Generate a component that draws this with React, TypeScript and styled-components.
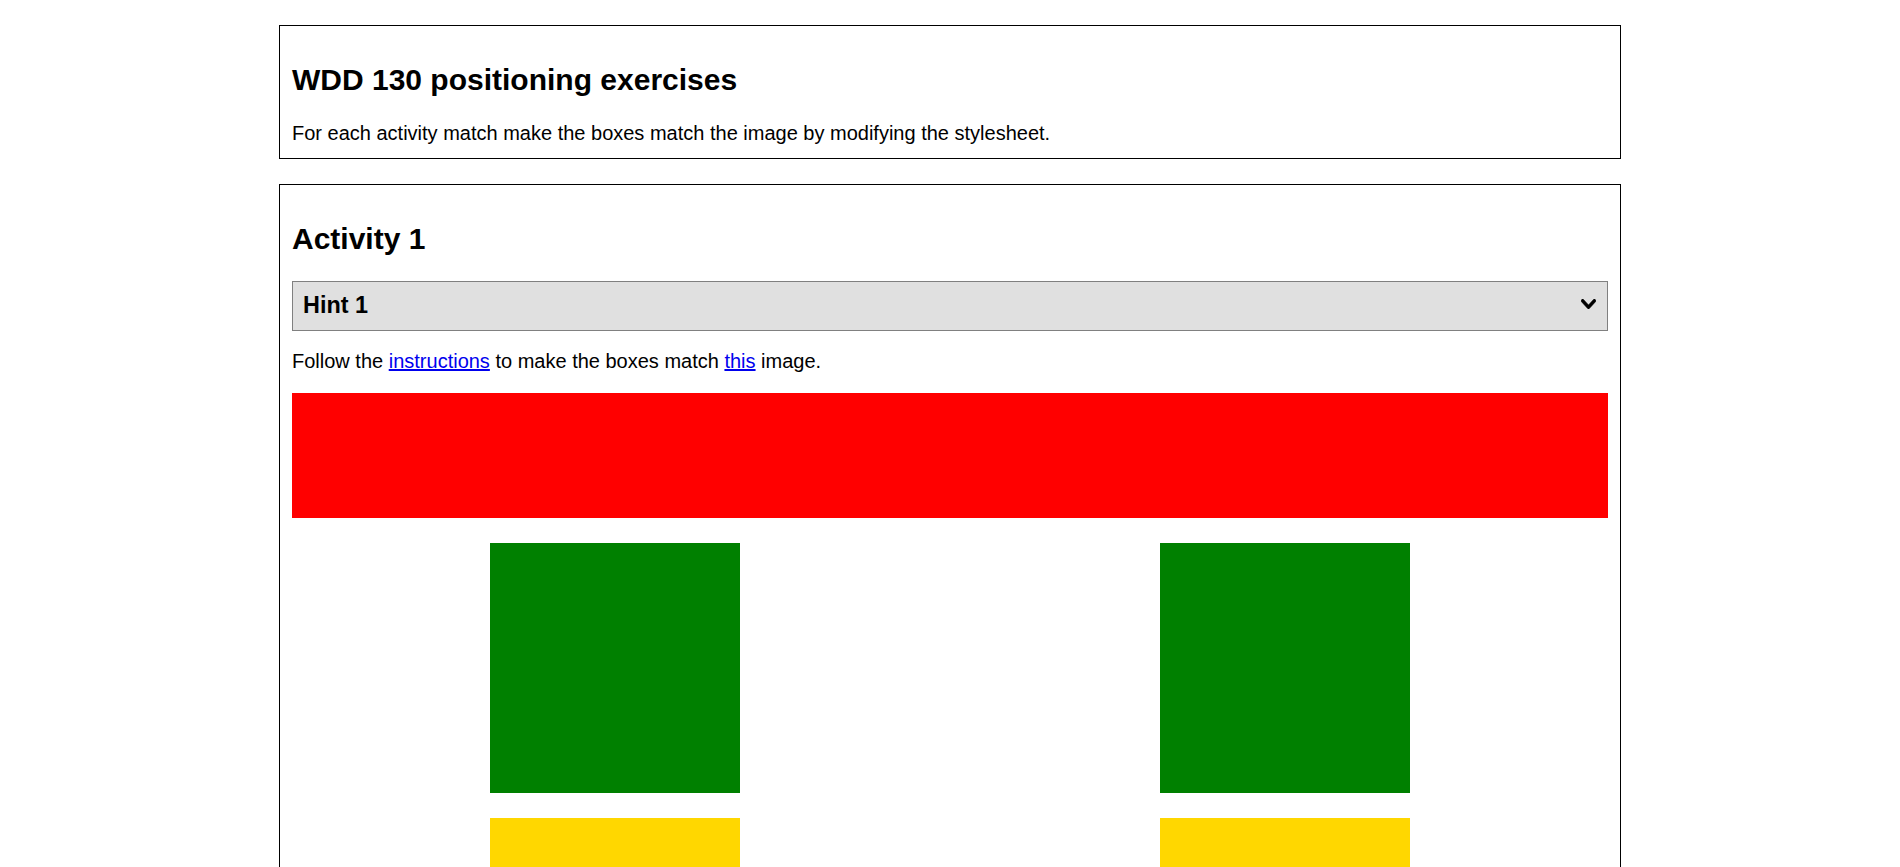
import React from "react";
import styled, { createGlobalStyle } from "styled-components";

const GlobalStyle = createGlobalStyle`
  html { scrollbar-width: none; }
  html::-webkit-scrollbar { display: none; }
  body {
    margin: 0;
    background: #ffffff;
    color: #000000;
    font-family: "Liberation Sans", Arial, Helvetica, sans-serif;
    font-size: 20px;
  }
`;

const Page = styled.main`
  width: 1342px;
  margin: 0 auto;
  padding: 25px 0;
  display: flex;
  flex-direction: column;
  gap: 25px;
`;

const Section = styled.section`
  border: 1px solid #000000;
  padding: 12px 12px 13px;
`;

const Heading = styled.h2`
  font-size: 30px;
  font-weight: bold;
  line-height: normal;
  margin: 25px 0;
`;

const Text = styled.p<{ $spaced?: boolean }>`
  margin: ${(p) => (p.$spaced ? "19px 0 20px" : "0")};
  line-height: normal;
`;

const Link = styled.a`
  color: #0000ee;
  text-decoration: underline;
`;

const Hint = styled.details`
  margin: 0;
  background: #e0e0e0;
  border: 1px solid #808080;
`;

const HintSummary = styled.summary`
  display: flex;
  align-items: center;
  justify-content: space-between;
  list-style: none;
  padding: 10px 11px 11px 10px;
  font-size: 23.4px;
  font-weight: bold;
  line-height: normal;
  cursor: pointer;
  &::-webkit-details-marker { display: none; }
`;

const Chevron = styled.svg`
  width: 15px;
  height: 10px;
  margin-bottom: 3px;
  flex: none;
`;

const BoxGrid = styled.div`
  display: grid;
  grid-template-columns: 1fr 1fr;
  gap: 25px;
`;

const Banner = styled.div`
  grid-column: 1 / -1;
  height: 125px;
  background: #ff0000;
`;

const Square = styled.div<{ $color: string }>`
  justify-self: center;
  width: 250px;
  height: 250px;
  background: ${(p) => p.$color};
`;

export default function App() {
  return (
    <>
      <GlobalStyle />
      <Page>
        <Section>
          <Heading>WDD 130 positioning exercises</Heading>
          <Text>For each activity match make the boxes match the image by modifying the stylesheet.</Text>
        </Section>
        <Section>
          <Heading>Activity 1</Heading>
          <Hint>
            <HintSummary>
              <span>Hint 1</span>
              <Chevron viewBox="5 123 438 266" preserveAspectRatio="none" aria-hidden="true">
                <path
                  fill="#000"
                  stroke="#000"
                  strokeWidth="18"
                  d="M207.029 381.476L12.686 187.132c-9.373-9.373-9.373-24.569 0-33.941l22.667-22.667c9.357-9.357 24.522-9.375 33.901-.04L224 284.505l154.745-154.021c9.379-9.335 24.544-9.317 33.901.04l22.667 22.667c9.373 9.373 9.373 24.569 0 33.941L240.971 381.476c-9.373 9.372-24.569 9.372-33.942 0z"
                />
              </Chevron>
            </HintSummary>
          </Hint>
          <Text $spaced>
            Follow the <Link href="#">instructions</Link> to make the boxes match <Link href="#">this</Link> image.
          </Text>
          <BoxGrid>
            <Banner />
            <Square $color="#008000" />
            <Square $color="#008000" />
            <Square $color="#ffd700" />
            <Square $color="#ffd700" />
          </BoxGrid>
        </Section>
      </Page>
    </>
  );
}
